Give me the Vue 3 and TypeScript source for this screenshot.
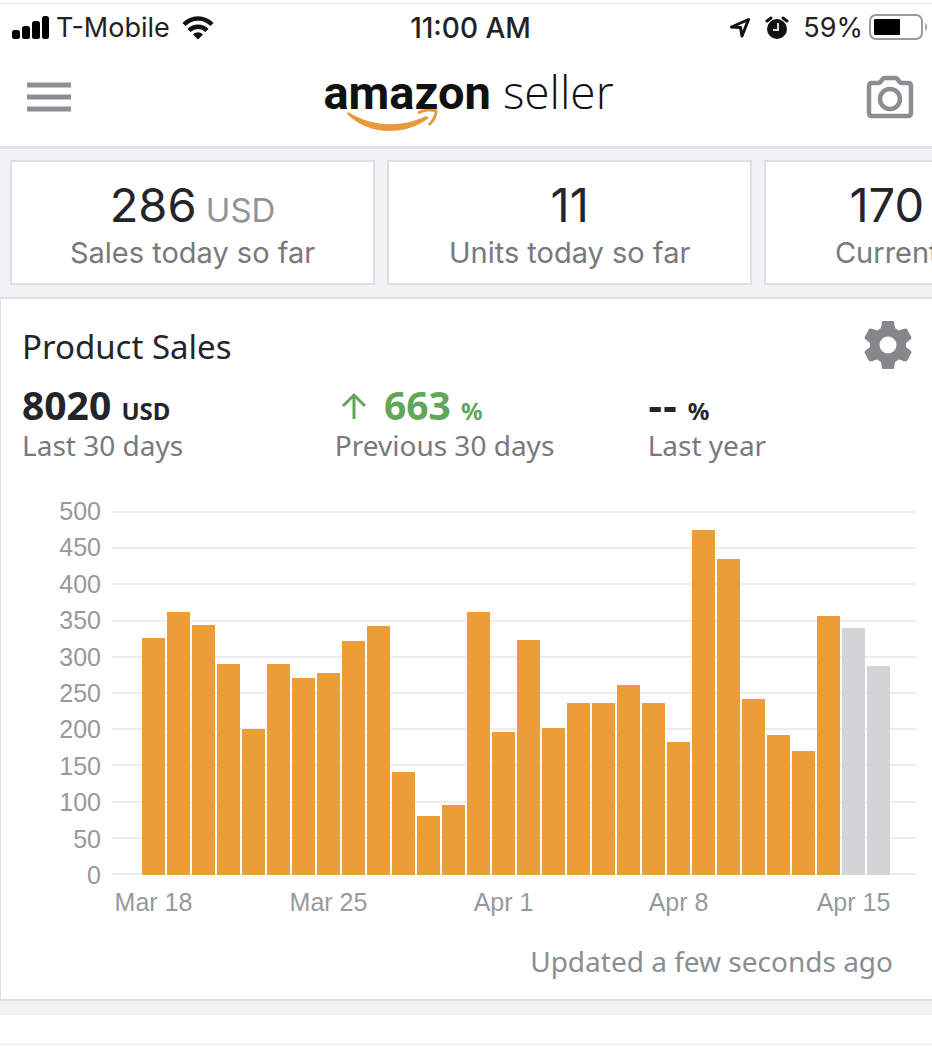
<script setup lang="ts">
interface Tile {
  value: string
  unit?: string
  label: string
}

interface Bar {
  value: number
  pending: boolean
  label: string
}

const maxValue = 500
const ticks: number[] = [500, 450, 400, 350, 300, 250, 200, 150, 100, 50, 0]

const tiles: Tile[] = [
  { value: '286', unit: 'USD', label: 'Sales today so far' },
  { value: '11', label: 'Units today so far' },
  { value: '170', label: 'Current' },
]

const sales: number[] = [
  325, 361, 343, 290, 200, 290, 271, 277, 321, 342, 141, 81, 96, 361, 196,
  323, 202, 236, 236, 261, 236, 183, 474, 434, 242, 193, 170, 356, 339, 287,
]

const dayLabels: Record<number, string> = {
  0: 'Mar 18',
  7: 'Mar 25',
  14: 'Apr 1',
  21: 'Apr 8',
  28: 'Apr 15',
}

const bars: Bar[] = sales.map((value, i) => ({
  value,
  pending: i >= sales.length - 2,
  label: dayLabels[i] ?? '',
}))

const barHeight = (value: number): string => `${(value / maxValue) * 100}%`
</script>

<template>
  <div class="app">
    <div class="status">
      <div class="status-side">
        <svg class="signal" width="38" height="24" viewBox="0 0 38 24" aria-hidden="true">
          <rect x="0" y="14" width="8" height="9" rx="2.5" />
          <rect x="10" y="10" width="8" height="13" rx="2.5" />
          <rect x="20" y="5" width="8" height="18" rx="2.5" />
          <rect x="30" y="0" width="7" height="23" rx="2.5" />
        </svg>
        <span>T-Mobile</span>
        <svg class="wifi" width="32" height="24" viewBox="0 0 32 24" aria-hidden="true">
          <path d="M2 8.500C10 0.500 22 0.500 30 8.500" fill="none" stroke="#111" stroke-width="4.500" />
          <path d="M7 14.500C12 9.500 20 9.500 25 14.500" fill="none" stroke="#111" stroke-width="4.500" />
          <path d="M11 18.500C14 15.500 18 15.500 21 18.500L16 23.500Z" fill="#111" />
        </svg>
      </div>
      <div class="clock">11:00 AM</div>
      <div class="status-side status-right">
        <svg width="22" height="22" viewBox="0 0 22 22" aria-hidden="true">
          <path d="M2.500 10L19.500 2.500L13 19L11.500 10.500Z" fill="none" stroke="#111" stroke-width="3" stroke-linejoin="round" />
        </svg>
        <svg class="alarm" width="24" height="24" viewBox="0 0 24 24" aria-hidden="true">
          <circle cx="12" cy="13" r="10" fill="#111" />
          <path d="M2 5L6 2M22 5L18 2" stroke="#111" stroke-width="3" stroke-linecap="round" />
          <path d="M13 7V14H8" fill="none" stroke="#ddd" stroke-width="2" />
        </svg>
        <span>59%</span>
        <svg class="battery" width="60" height="28" viewBox="0 0 60 28" aria-hidden="true">
          <rect x="1" y="1" width="52" height="24" rx="6" fill="#fff" stroke="#999" stroke-width="2" />
          <rect x="5" y="5" width="26" height="16" rx="1" fill="#000" />
          <path d="M56 9C59 10 59 16 56 17Z" fill="#aaa" />
        </svg>
      </div>
    </div>

    <header class="nav">
      <button class="icon-btn" type="button" aria-label="Menu">
        <svg width="44" height="30" viewBox="0 0 44 30">
          <path d="M0 3H44M0 15H44M0 27H44" stroke="#8b8d92" stroke-width="5" />
        </svg>
      </button>
      <h1 class="logo">
        <span class="brand">amazon
          <svg class="smile" width="92" height="26" viewBox="0 0 92 26" aria-hidden="true">
            <path d="M1 3C25 18 54 19 79 7L82 9C58 27 22 27 0 5Z" fill="#e69a3c" />
            <path d="M71 4C77 1 85 0 89 2C89 7 86 12 82 16" fill="none" stroke="#e69a3c" stroke-width="3" />
          </svg>
        </span>
        <span class="product">seller</span>
      </h1>
      <button class="icon-btn" type="button" aria-label="Camera">
        <svg width="48" height="44" viewBox="0 0 48 44">
          <path
            d="M6 8H12Q14 8 15 6L16 5Q17 3 19 3H29Q31 3 32 5L33 6Q34 8 36 8H42Q45 8 45 11V38Q45 41 42 41H6Q3 41 3 38V11Q3 8 6 8Z"
            fill="none" stroke="#8b8d92" stroke-width="4.500" />
          <circle cx="24" cy="24" r="10" fill="none" stroke="#8b8d92" stroke-width="4.500" />
        </svg>
      </button>
    </header>

    <section class="tiles" aria-label="Summary">
      <div v-for="tile in tiles" :key="tile.label" class="tile">
        <div class="tile-value">
          {{ tile.value }}<span v-if="tile.unit" class="tile-unit">&nbsp;{{ tile.unit }}</span>
        </div>
        <div class="tile-label">{{ tile.label }}</div>
      </div>
    </section>

    <section class="card">
      <div class="card-head">
        <h2>Product Sales</h2>
        <button class="icon-btn" type="button" aria-label="Settings">
          <svg width="48" height="48" viewBox="0 0 48 48">
            <path
              fill="#85878c" fill-rule="evenodd"
              d="M19 0H29Q30 0 30 1L31 7L35 9.500L41 7.500L43 8L47.500 16.500L47 18L42 22V26L47 30L47.500 31.500L43 40L41 40.500L35 38.500L31 41L30 47Q30 48 29 48H19Q18 48 18 47L17 41L13 38.500L7 40.500L5 40L0.500 31.500L1 30L6 26V22L1 18L0.500 16.500L5 8L7 7.500L13 9.500L17 7L18 1Q18 0 19 0ZM24 15.500A8.500 8.500 0 1 0 24 32.500A8.500 8.500 0 1 0 24 15.500Z" />
          </svg>
        </button>
      </div>

      <div class="kpis">
        <div class="kpi">
          <div class="kpi-value">8020 <small>USD</small></div>
          <div class="kpi-label">Last 30 days</div>
        </div>
        <div class="kpi">
          <div class="kpi-value up">
            <svg class="arrow" width="28" height="28" viewBox="0 0 28 28" aria-label="Up">
              <path d="M14 27V4M3 14L14 3L25 14" fill="none" stroke="#62a758" stroke-width="3" />
            </svg>
            663 <small>%</small>
          </div>
          <div class="kpi-label">Previous 30 days</div>
        </div>
        <div class="kpi">
          <div class="kpi-value"><span class="no-value">--</span> <small>%</small></div>
          <div class="kpi-label">Last year</div>
        </div>
      </div>

      <div class="chart">
        <div class="y-axis">
          <span v-for="t in ticks" :key="t">{{ t }}</span>
        </div>
        <div class="plot">
          <div class="grid-lines">
            <i v-for="t in ticks" :key="t"></i>
          </div>
          <div class="bars">
            <div
              v-for="(bar, i) in bars" :key="i" class="bar" :class="{ pending: bar.pending }"
              :style="{ height: barHeight(bar.value) }"></div>
          </div>
        </div>
        <div class="x-axis">
          <span v-for="(bar, i) in bars" :key="i">{{ bar.label }}</span>
        </div>
      </div>

      <p class="updated">Updated a few seconds ago</p>
    </section>

    <div class="next-card"></div>
  </div>
</template>

<style>
body {
  margin: 0;
  background: #fff;
}
</style>

<style scoped>
.app {
  padding-top: 3px;
  overflow: hidden;
  font-family: "Noto Sans", "Open Sans", sans-serif;
  color: #232529;
}

.status {
  display: grid;
  grid-template-columns: 1fr auto 1fr;
  align-items: center;
  height: 48px;
  padding: 0 3px 0 12px;
  border-top: 1px solid #e6e6e6;
  font: 400 27px/32px Inter, Roboto, sans-serif;
  color: #222;
}

.status svg {
  display: block;
}

.status-side {
  display: flex;
  align-items: center;
}

.signal {
  margin-right: 6px;
}

.wifi {
  margin-left: 12px;
}

.clock {
  font-size: 28px;
  font-weight: 500;
}

.status-right {
  justify-content: flex-end;
}

.alarm {
  margin: 0 14px;
}

.battery {
  margin-left: 6px;
}

.nav {
  display: flex;
  align-items: center;
  justify-content: space-between;
  height: 90px;
  padding: 0 18px 4px 27px;
  border-bottom: 3px solid #dfe1e4;
}

.icon-btn {
  padding: 0;
  border: 0;
  background: none;
}

.icon-btn svg {
  display: block;
}

.logo {
  display: flex;
  align-items: baseline;
  gap: 12px;
  margin: 0;
  padding-bottom: 10px;
  line-height: 60px;
  color: #111;
}

.brand {
  position: relative;
  font-family: Roboto, "Open Sans", sans-serif;
  font-size: 47px;
  font-weight: 700;
}

.smile {
  position: absolute;
  left: 24px;
  bottom: -12px;
}

.product {
  font-family: "Open Sans", "Noto Sans", sans-serif;
  font-size: 46px;
  font-weight: 300;
}

.tiles {
  display: flex;
  gap: 12px;
  padding: 11px 0 12px 10px;
  background: #f1f2f4;
}

.tile {
  box-sizing: border-box;
  flex: 0 0 39.6%;
  height: 125px;
  padding: 15px 0;
  border: 2px solid #dddfe2;
  background: #fff;
  font-family: Inter, Roboto, sans-serif;
  text-align: center;
  white-space: nowrap;
}

.tile:last-child {
  padding-right: 120px;
}

.tile-value {
  height: 58px;
  font-size: 47px;
  line-height: 56px;
}

.tile-unit {
  font-size: 33px;
  line-height: 33px;
  color: #929498;
}

.tile-label {
  font-size: 29px;
  line-height: 36px;
  color: #77797d;
}

.card {
  padding: 20px 0 18px 21px;
  border: 2px solid #dddfe2;
  border-width: 2px 0 2px 1px;
  background: #fff;
}

.card-head {
  display: flex;
  align-items: center;
  justify-content: space-between;
  height: 52px;
  padding-right: 20px;
}

h2 {
  margin: 0;
  padding-top: 4px;
  font-size: 33px;
  font-weight: 400;
  line-height: 40px;
}

.kpis {
  display: grid;
  grid-template-columns: 11fr 11fr 10fr;
  margin-top: 12px;
}

.kpi-value {
  height: 44px;
  font-size: 39px;
  font-weight: 700;
  line-height: 44px;
}

.kpi-value small {
  font-size: 24px;
  line-height: 24px;
}

.no-value {
  font-family: "DejaVu Sans", sans-serif;
  font-size: 36px;
  line-height: 36px;
}

.up {
  color: #62a758;
}

.arrow {
  margin: 0 6px 0 5px;
}

.kpi-label {
  font-size: 28px;
  line-height: 36px;
  color: #77797d;
}

.chart {
  display: grid;
  grid-template-columns: 79px 1fr;
  column-gap: 11px;
  margin: 30px 16px 0 0;
  font: 400 25px/36px "Liberation Sans", Arial, sans-serif;
  color: #97999d;
}

.y-axis {
  display: flex;
  flex-direction: column;
  justify-content: space-between;
  height: 400px;
  text-align: right;
}

.plot {
  display: grid;
  height: 364px;
  margin-top: 18px;
}

.grid-lines,
.bars {
  grid-area: 1 / 1;
}

.grid-lines {
  display: flex;
  flex-direction: column;
  justify-content: space-between;
}

.grid-lines i {
  height: 2px;
  background: #ededee;
}

.bars,
.x-axis {
  display: grid;
  grid-template-columns: repeat(30, 1fr);
  padding: 0 25px 0 29px;
}

.bars {
  align-items: end;
}

.bar {
  margin: 0 1px;
  background: #ec9d38;
}

.bar.pending {
  background: #d4d4d6;
}

.x-axis {
  grid-column: 2;
  height: 36px;
  margin-top: -9px;
}

.x-axis span {
  display: flex;
  justify-content: center;
  min-width: 0;
  white-space: nowrap;
}

.updated {
  margin: 21px 39px 0 0;
  font-size: 28px;
  line-height: 40px;
  text-align: right;
  color: #8b8d91;
}

.next-card {
  height: 28px;
  border-top: 14px solid #f2f2f2;
  border-bottom: 3px solid #f7f7f7;
}
</style>
